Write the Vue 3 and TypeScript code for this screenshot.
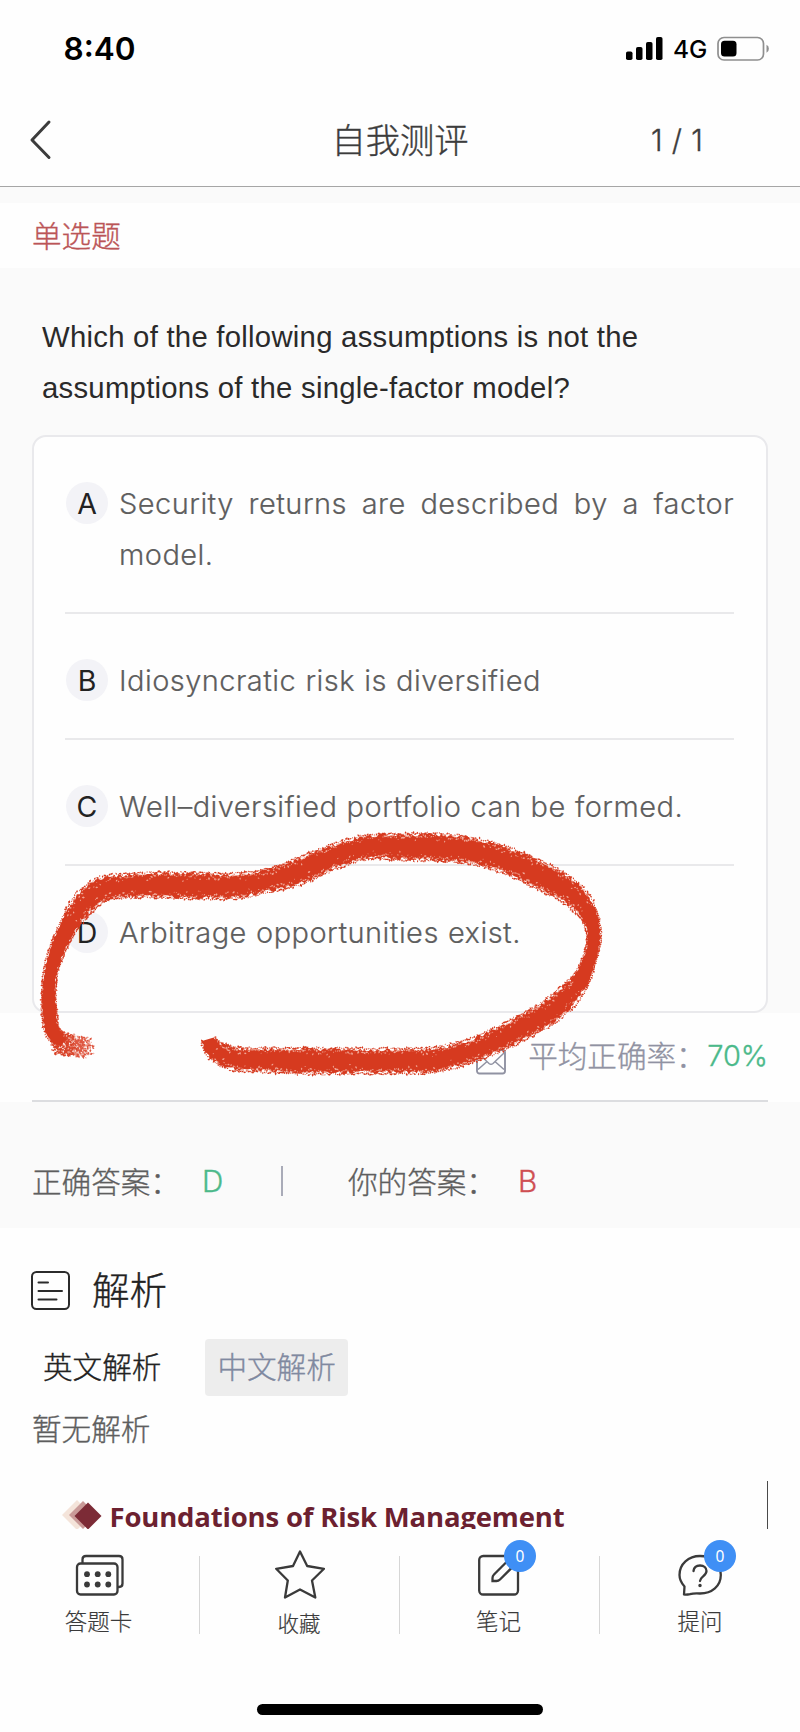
<script setup lang="ts">
interface Option {
  key: string
  text: string
}

const options: Option[] = [
  { key: 'A', text: 'Security returns are described by a factor model.' },
  { key: 'B', text: 'Idiosyncratic risk is diversified' },
  { key: 'C', text: 'Well–diversified portfolio can be formed.' },
  { key: 'D', text: 'Arbitrage opportunities exist.' },
]

type Point = [x: number, y: number, width: number]

// Centre line and thickness of the crayon stroke
const stroke: Point[] = [
  [63, 1043, 8], [57, 1038, 14], [51, 1027, 14], [49, 1004, 14], [49, 986, 13],
  [51, 970, 13], [56, 953, 15], [63, 937, 16], [72, 920, 18], [85, 902, 22],
  [102, 889, 22], [125, 886, 22], [150, 885, 23], [200, 886, 24], [235, 886, 23],
  [267, 881, 21], [300, 871, 24], [333, 857, 22], [367, 847, 22], [400, 847, 24],
  [433, 847, 25], [467, 850, 24], [500, 858, 24], [533, 872, 25], [564, 888, 24],
  [582, 904, 20], [591, 920, 15], [594, 940, 13], [589, 961, 13], [580, 981, 17],
  [566, 998, 21], [545, 1015, 22], [523, 1027, 22], [498, 1040, 22], [467, 1052, 21],
  [433, 1060, 23], [400, 1061, 23], [350, 1061, 23], [300, 1061, 24], [267, 1060, 22],
  [235, 1059, 21], [219, 1053, 19], [211, 1046, 16], [208, 1038, 12],
]

let seed = 7
function rand(): number {
  seed = (seed * 16807) % 2147483647
  return seed / 2147483647
}

function spline(a: number, b: number, c: number, d: number, t: number): number {
  return 0.5 * (2 * b + (c - a) * t + (2 * a - 5 * b + 4 * c - d) * t * t + (3 * b - a - 3 * c + d) * t * t * t)
}

function resample(points: Point[]): Point[] {
  const out: Point[] = []
  for (let i = 0; i < points.length - 1; i++) {
    const p = [points[Math.max(0, i - 1)], points[i], points[i + 1], points[Math.min(points.length - 1, i + 2)]]
    const n = Math.ceil(Math.hypot(p[2][0] - p[1][0], p[2][1] - p[1][1]) / 2)
    for (let k = 0; k < n; k++) {
      const v = [0, 1, 2].map((j) => spline(p[0][j], p[1][j], p[2][j], p[3][j], k / n))
      out.push([v[0], v[1], v[2]])
    }
  }
  return out
}

function speck(x: number, y: number, r: number): string {
  const a = rand() * 3.14
  const dx = Math.cos(a) * r
  const dy = Math.sin(a) * r
  return `M${(x - dx).toFixed(1)} ${(y - dy).toFixed(1)}l${(dx + dy * 0.6).toFixed(1)} ${(dy - dx * 0.6).toFixed(1)}l${(dx - dy * 0.6).toFixed(1)} ${(dy + dx * 0.6).toFixed(1)}l${(-dx - dy * 0.6).toFixed(1)} ${(dx * 0.6 - dy).toFixed(1)}z`
}

const line = resample(stroke)
const left: string[] = []
const right: string[] = []
let grains = ''
let gaps = ''
line.forEach(([x, y, w], i) => {
  const [ax, ay] = line[Math.max(0, i - 2)]
  const [bx, by] = line[Math.min(line.length - 1, i + 2)]
  const len = Math.hypot(bx - ax, by - ay) || 1
  const nx = -(by - ay) / len
  const ny = (bx - ax) / len
  const rough = w > 18 ? 3.6 : 1.8
  const l = w / 2 - 0.3 + (rand() - 0.5) * rough
  const r = w / 2 - 0.3 + (rand() - 0.5) * rough
  left.push(`${(x + nx * l).toFixed(1)} ${(y + ny * l).toFixed(1)}`)
  right.unshift(`${(x - nx * r).toFixed(1)} ${(y - ny * r).toFixed(1)}`)
  for (const side of [-1, 1]) {
    const o = side * (w / 2 + rand() * rough * 0.6)
    grains += speck(x + nx * o, y + ny * o, 0.8 + rand() * 1.1)
    if (w > 18) {
      const g = side * (w / 2 - 0.5 - rand() * rand() * 8)
      gaps += speck(x + nx * g, y + ny * g, 0.6 + rand() * 1.1)
    }
  }
})
const body = `M${left.join('L')}L${right.join('L')}Z`

// Start of the stroke: dense next to the body, fading towards its tip
const smudge = ['', '', '']
for (let i = 0; i < 560; i++) {
  const t = rand()
  const a = rand() * 6.283
  const q = Math.sqrt(rand())
  const layer = t < 0.4 ? 2 : rand() < 0.45 ? 1 : 0
  smudge[layer] += speck(59 + t * 27 + Math.cos(a) * q * 10, 1043 + t * 5 + Math.sin(a) * q * (12.500 - t * 1.500), 0.7 + rand() * 1.2)
}
</script>

<template>
  <div class="screen">
    <header class="status">
      <span class="time">8:40</span>
      <div class="signals">
        <svg class="bars" width="37" height="24" viewBox="0 0 37 24">
          <rect x="0" y="14.5" width="6.5" height="8.5" rx="1.8" />
          <rect x="10" y="10" width="6.5" height="13" rx="1.8" />
          <rect x="20" y="5" width="6.5" height="18" rx="1.8" />
          <rect x="30" y="0" width="6.5" height="23" rx="1.8" />
        </svg>
        <span class="net">4G</span>
        <svg class="battery" width="53" height="26" viewBox="0 0 53 26">
          <rect x="1" y="1.5" width="45.5" height="22.5" rx="6" fill="none" stroke="#8f8f8f" stroke-width="1.7" />
          <rect x="4" y="4.8" width="15.5" height="15.8" rx="3.5" fill="#000" />
          <path d="M49.5 8.8q2.4 1 2.4 4t-2.4 4z" fill="#8f8f8f" />
        </svg>
      </div>
    </header>

    <nav class="nav">
      <svg class="back" width="24" height="42" viewBox="0 0 24 42">
        <path d="M20 3L3 21L20 38.5" fill="none" stroke="#3c3c3c" stroke-width="3" stroke-linecap="round" stroke-linejoin="round" />
      </svg>
      <h1 class="title">自我测评</h1>
      <span class="count">1 / 1</span>
    </nav>

    <div class="kind">单选题</div>

    <main class="quiz">
      <p class="question">Which of the following assumptions is not the<br />assumptions of the single-factor model?</p>
      <ul class="card">
        <li v-for="o in options" :key="o.key" class="option">
          <span class="letter">{{ o.key }}</span>
          <span class="text">{{ o.text }}</span>
        </li>
      </ul>
    </main>

    <div class="rate">
      <svg width="30" height="26" viewBox="0 0 30 26" fill="none" stroke="#9092a2" stroke-width="1.5">
        <rect x="1" y="1" width="28" height="23.5" rx="2.5" stroke-width="1.9" />
        <path d="M2 4L13 14.5Q15 16 17 14.5L28 4M2 20.5L10.5 13M28 20.5L19.5 13" />
      </svg>
      <span class="rate-label">平均正确率：</span>
      <span class="rate-value">70%</span>
    </div>

    <section class="answers">
      <span class="a-label">正确答案：</span>
      <span class="a-right">D</span>
      <i class="a-bar"></i>
      <span class="a-label">你的答案：</span>
      <span class="a-wrong">B</span>
    </section>

    <section class="analysis">
      <div class="heading">
        <svg width="39" height="39" viewBox="0 0 39 39" fill="none" stroke="#2b2b2b" stroke-width="2" stroke-linecap="round">
          <rect x="1" y="1" width="37" height="37" rx="4.5" />
          <path d="M7.5 11.5H17M7.5 20H31M7.5 28.5H25.5" />
        </svg>
        <h2>解析</h2>
      </div>
      <div class="langs">
        <span class="lang">英文解析</span>
        <span class="lang active">中文解析</span>
      </div>
      <p class="none">暂无解析</p>
      <div class="slide">
        <svg width="42" height="32" viewBox="0 0 42 32">
          <path d="M16 1L31 16L16 31L1 16z" fill="#f4e4da" />
          <path d="M22 2L36 16L22 30L8 16z" fill="#c99a98" />
          <path d="M27 3.5L40.5 17L27 30.5L13.5 17z" fill="#7c2b36" />
        </svg>
        <strong>Foundations of Risk Management</strong>
      </div>
    </section>

    <footer class="tabs">
      <div class="tab">
        <svg width="50" height="52" viewBox="0 0 50 52" fill="none" stroke="#3a3a3a" stroke-width="2.3">
          <path d="M7.5 13V9.5Q7.5 6 11 6H44Q47.500 6 47.500 9.500V33.500Q47.500 37 44 37H42.500" />
          <rect x="2" y="13.5" width="40.5" height="31" rx="3.5" />
          <g fill="#3a3a3a" stroke="none">
            <circle cx="12" cy="24.2" r="2.9" /><circle cx="22.7" cy="24.2" r="2.9" /><circle cx="33.3" cy="24.2" r="2.9" />
            <circle cx="12" cy="34.5" r="2.9" /><circle cx="22.7" cy="34.5" r="2.9" /><circle cx="33.3" cy="34.5" r="2.9" />
          </g>
        </svg>
        <span>答题卡</span>
      </div>
      <div class="tab fav">
        <svg width="50" height="52" viewBox="0 0 50 52" fill="none" stroke="#3a3a3a" stroke-width="2.3" stroke-linejoin="round">
          <path d="M25 1.5L32.2 16L49 18.8L37 30.5L40.3 47.5L25 39.5L10 47.5L12.8 30.5L1.2 18.8L18 16z" />
        </svg>
        <span>收藏</span>
      </div>
      <div class="tab">
        <div class="icon">
          <svg width="42" height="52" viewBox="0 0 42 52" fill="none" stroke="#3a3a3a" stroke-width="2.3">
            <rect x="1.2" y="6" width="38.8" height="38.5" rx="4" />
            <path d="M30 10.5L16 24.5Q14.5 26 14.5 28V31H18.5Q20.5 31 22 29.5L36 15.5z" />
          </svg>
          <b class="badge">0</b>
        </div>
        <span>笔记</span>
      </div>
      <div class="tab ask">
        <div class="icon">
          <svg width="44" height="52" viewBox="0 0 44 52" fill="none" stroke="#3a3a3a" stroke-width="2.3" stroke-linejoin="round" stroke-linecap="round">
            <path d="M6 44.5L6.5 36.5Q1.5 31 1.5 25C1.5 14 10.5 6 22 6S42.8 14 42.8 25S34 43.5 22 43.5Q16 43 12 44.2Q8 45 6 44.5z" />
            <path d="M15.5 21C16 17 18.5 15.5 22 15.5C26 15.5 28.5 18 28.5 21C28.5 26 22 26.5 22 31" />
            <circle cx="22" cy="35.5" r="1" fill="#3a3a3a" stroke-width="1.5" />
          </svg>
          <b class="badge">0</b>
        </div>
        <span>提问</span>
      </div>
    </footer>
    <div class="home"></div>

    <svg class="crayon" width="800" height="1732" viewBox="0 0 800 1732">
      <path :d="smudge[0]" fill="#eb8f7e" />
      <path :d="smudge[1]" fill="#de5640" />
      <path :d="smudge[2]" fill="#d8442a" />
      <path :d="body" fill="#d63a1f" />
      <path :d="grains" fill="#d63a1f" />
      <path :d="gaps" fill="#f0a595" />
    </svg>
  </div>
</template>

<style>
body {
  background: #fefefe;
}
</style>

<style scoped>
.screen {
  position: relative;
  width: 800px;
  height: 1732px;
  overflow: hidden;
  box-sizing: border-box;
  background: #fefefe;
  font-family: Inter, 'Noto Sans CJK SC', sans-serif;
  font-weight: 300;
  color: #5e5e5e;
  -webkit-text-stroke: 0.35px currentColor;
}
h1, h2, p, ul {
  margin: 0;
  padding: 0;
  font-weight: 300;
}
.status {
  display: flex;
  justify-content: space-between;
  height: 98px;
  padding: 0 30px 0 63.5px;
  color: #000;
  -webkit-text-stroke: 0;
}
.time {
  font: 600 31.5px/98px Inter, sans-serif;
}
.signals {
  display: flex;
  align-items: center;
}
.bars {
  margin-right: 10px;
}
.net {
  width: 34px;
  margin-right: 10px;
  font: 500 24.5px/98px Inter, sans-serif;
  white-space: nowrap;
}
.nav {
  display: grid;
  grid-template-columns: 266px 268px 266px;
  align-items: center;
  height: 88px;
  border-bottom: 1px solid #a6a6a6;
  color: #3c3c3c;
}
.back {
  margin-left: 29px;
  margin-top: -4px;
}
.title {
  font-size: 34.3px;
  line-height: 84px;
  margin-top: -2px;
  text-align: center;
}
.count {
  padding-left: 117px;
  font-size: 29.3px;
  letter-spacing: 0.5px;
  margin-top: -3px;
}
.kind {
  height: 65px;
  border-top: 16px solid #fafafa;
  padding-left: 32px;
  font-size: 29.6px;
  line-height: 67px;
  color: #bb5557;
}
.quiz {
  height: 745px;
  padding: 0 32px;
  background: #fafafa;
}
.question {
  padding: 43px 0 21px 10px;
  font: 400 29.3px/51.3px 'Liberation Sans', Arial, sans-serif;
  letter-spacing: 0.26px;
  color: #2a2a2a;
  white-space: nowrap;
  -webkit-text-stroke: 0;
}
.card {
  height: 578px;
  box-sizing: border-box;
  padding: 0 32px 0 31px;
  border: 2px solid #e9e9ec;
  border-radius: 14px;
  background: #fefefe;
  list-style: none;
}
.option {
  display: flex;
  padding: 41px 0 31.8px;
  border-bottom: 2px solid #e9e9eb;
  line-height: 51.2px;
}
.option:last-child {
  border-bottom: 0;
}
.letter {
  flex: none;
  width: 42px;
  height: 42px;
  margin: 4px 11px 0 1px;
  border-radius: 50%;
  background: #f3f3f7;
  font: 400 28.5px/43px Inter, sans-serif;
  color: #222;
  text-align: center;
  -webkit-text-stroke: 0;
}
.text {
  flex: 1;
  font-size: 29px;
  letter-spacing: 0.45px;
  word-spacing: 0.6px;
  text-align: justify;
  -webkit-text-stroke: 0.2px currentColor;
}
.rate {
  display: flex;
  align-items: center;
  height: 87px;
  margin: 0 32px;
  border-bottom: 2px solid #dcdde0;
  justify-content: flex-end;
  color: #9092a2;
}
.rate svg {
  margin: 10px 22px 0 0;
}
.rate-label {
  font-size: 29.6px;
  width: 179px;
  margin-top: -4px;
  white-space: nowrap;
}
.rate-value {
  font-size: 29px;
  margin-top: -2px;
  color: #4bb98a;
}
.answers {
  display: flex;
  align-items: center;
  height: 126px;
  padding: 32px 0 0 32px;
  box-sizing: border-box;
  background: #fafafa;
  font-size: 29.6px;
}
.a-label {
  width: 170px;
  margin-top: -2px;
  white-space: nowrap;
}
.a-right {
  width: 79px;
  color: #4bb98a;
}
.a-bar {
  width: 2px;
  height: 30px;
  margin-right: 65px;
  background: #a9abb8;
}
.a-wrong {
  color: #cf4f53;
}
.analysis {
  height: 302px;
  overflow: hidden;
}
.heading {
  display: flex;
  align-items: center;
  height: 52px;
  margin: 36px 0 0 31px;
  color: #222;
}
.heading h2 {
  margin-left: 22px;
  font-size: 37.5px;
  line-height: 53px;
}
.langs {
  display: flex;
  gap: 32px;
  margin: 23px 0 0 31px;
}
.lang {
  padding: 0 12px;
  border-radius: 4px;
  font-size: 29.6px;
  line-height: 57px;
  color: #222;
}
.active {
  background: #ededed;
  color: #8089a0;
}
.none {
  margin-left: 32px;
  font-size: 29.6px;
  line-height: 66px;
}
.slide {
  display: flex;
  align-items: flex-start;
  height: 48px;
  margin: 19px 32px 0 32px;
  padding-left: 29px;
  border-right: 1px solid #4a4a4a;
  overflow: hidden;
  -webkit-text-stroke: 0;
}
.slide svg {
  flex: none;
  margin: 18px 6.5px 0 0;
}
.slide strong {
  margin-top: 16px;
  font: 700 27.5px/40px 'Open Sans', sans-serif;
  letter-spacing: -0.17px;
  color: #6c2130;
  white-space: nowrap;
}
.tabs {
  display: grid;
  grid-template-columns: repeat(4, 200px);
  height: 122px;
  padding-top: 19px;
}
.tab {
  display: flex;
  flex-direction: column;
  align-items: center;
  position: relative;
  padding-top: 1px;
  font-size: 22.5px;
  line-height: 34px;
  color: #3a3a3a;
  -webkit-text-stroke: 0.2px currentColor;
}
.tab > span {
  margin-top: 3px;
  margin-right: 3px;
}
.tab > svg {
  margin-right: 1px;
}
.fav > span {
  margin-top: 5px;
  margin-right: 2px;
  font-size: 21.5px;
}
.tab:not(:last-child)::after {
  content: '';
  position: absolute;
  right: 0;
  top: 7px;
  width: 1px;
  height: 78px;
  background: #d6d6d6;
}
.icon {
  position: relative;
  height: 52px;
  margin-right: 2px;
}
.ask .icon {
  margin-right: 0;
}
.ask > span {
  margin-right: 0;
}
.badge {
  position: absolute;
  left: 26px;
  top: -10px;
  width: 32px;
  height: 32px;
  border-radius: 50%;
  background: #3f8ff5;
  font: 400 15.5px/33px 'Noto Sans', sans-serif;
  color: #fff;
  text-align: center;
  -webkit-text-stroke: 0;
}
.home {
  width: 286px;
  height: 11px;
  margin: 33px auto 0;
  border-radius: 6px;
  background: #000;
}
.crayon {
  position: absolute;
  left: 0;
  top: 0;
  pointer-events: none;
}
</style>
